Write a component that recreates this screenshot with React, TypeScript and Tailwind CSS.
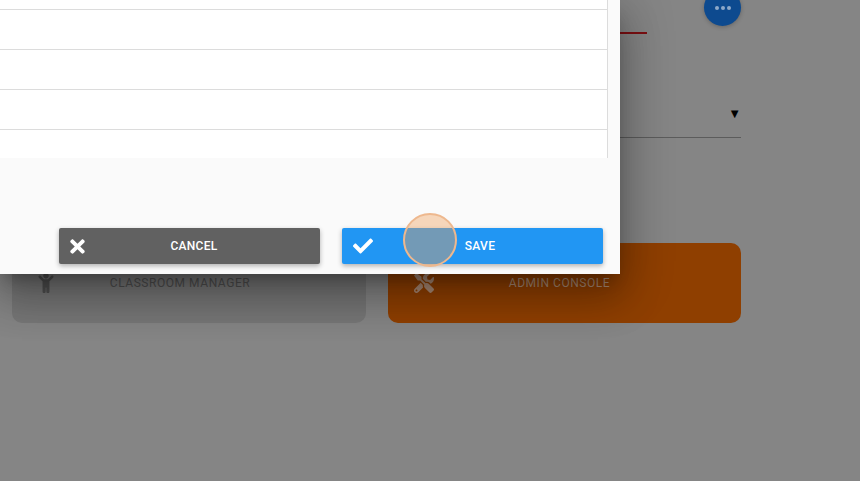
import { FaCheck, FaChild, FaTimes, FaTools } from 'react-icons/fa';

const rows = [0, 1, 2, 3];

function ActionCard({ label, icon, className }: { label: string; icon: React.ReactNode; className: string }) {
  return (
    <div className={`flex h-[80px] items-center rounded-[10px] ${className}`}>
      <span className="flex w-[20px] justify-center text-[20px]">{icon}</span>
      <span className="flex-1 text-center text-[12px] tracking-[0.55px]">{label}</span>
    </div>
  );
}

function DialogButton({ label, icon, className }: { label: string; icon: React.ReactNode; className: string }) {
  return (
    <button className={`flex h-[36px] w-[261px] items-center rounded-[2px] text-white shadow-[0_2px_5px_rgba(0,0,0,0.3)] ${className}`}>
      {icon}
      <span className="flex-1 text-center text-[12px] font-medium tracking-[0.3px]">{label}</span>
    </button>
  );
}

export default function App() {
  return (
    <div className="relative h-[481px] w-[860px] overflow-hidden bg-[#858585] font-['Roboto',sans-serif]">
      {/* page behind the overlay */}
      <div className="flex w-[741px] flex-col">
        <div className="-mt-[11px] flex justify-end">
          <div className="flex h-[37px] w-[37px] items-center justify-center gap-[2px] rounded-full bg-[#0d4a8f] shadow-[0_1px_4px_rgba(0,0,0,0.25)]">
            <span className="h-[4px] w-[4px] rounded-full bg-[#8ea9c9]" />
            <span className="h-[4px] w-[4px] rounded-full bg-[#8ea9c9]" />
            <span className="h-[4px] w-[4px] rounded-full bg-[#8ea9c9]" />
          </div>
        </div>
        <div className="ml-[600px] mr-[94px] mt-[6px] h-[1.5px] bg-[#7d0f12]" />
        <div className="ml-[600px] mt-[71px] flex h-[33px] items-start justify-end border-b border-[#5c5c5c]">
          <span className="pt-[2px] text-[13px] leading-[14px] text-black">▼</span>
        </div>
        <div className="mt-[105px] flex justify-between pl-[12px]">
          <ActionCard label="CLASSROOM MANAGER" icon={<FaChild />} className="w-[354px] bg-[#777777] pl-[24px] pr-[62px] text-[#4f4f4f]" />
          <ActionCard label="ADMIN CONSOLE" icon={<FaTools />} className="w-[353px] bg-[#8f3f00] pl-[26px] pr-[56px] text-[#aa8a75]" />
        </div>
      </div>

      {/* dialog */}
      <div className="absolute left-0 top-0 flex h-[274px] w-[620px] flex-col bg-[#fafafa] shadow-[0_11px_15px_-7px_rgba(0,0,0,0.28),0_24px_38px_3px_rgba(0,0,0,0.2),0_9px_46px_8px_rgba(0,0,0,0.18)]">
        <div className="-mt-[30px] h-[188px] w-[608px] overflow-hidden border-r border-[#dcdcdc] bg-white">
          {rows.map((row) => (
            <div key={row} className="h-[40px] border-b border-[#dcdcdc]" />
          ))}
        </div>
        <div className="flex gap-[22px] pl-[59px] pt-[70px]">
          <DialogButton label="CANCEL" icon={<FaTimes className="h-[21px] w-[21px]" />} className="bg-[#616161] pl-[8px] pr-[20px]" />
          <DialogButton label="SAVE" icon={<FaCheck className="h-[20px] w-[20px]" />} className="bg-[#2196f3] pl-[11px] pr-[16px]" />
        </div>
      </div>

      {/* click highlight */}
      <div className="absolute left-[402.5px] top-[213px] h-[54px] w-[54px] rounded-full border-[2px] border-[#eeb88e] bg-[rgba(240,160,90,0.4)]" />
    </div>
  );
}
